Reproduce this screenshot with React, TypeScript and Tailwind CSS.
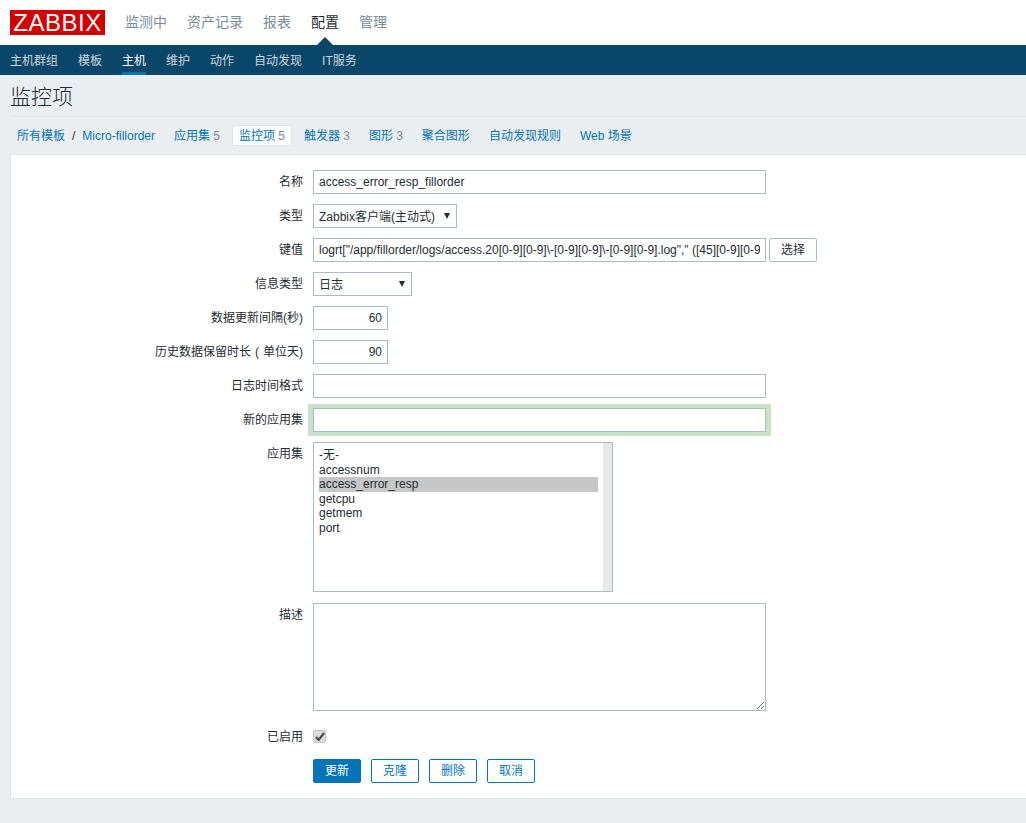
const font = { fontFamily: '"Liberation Sans", "Noto Sans CJK SC", sans-serif' }

const topMenu = ['监测中', '资产记录', '报表', '配置', '管理']
const subMenu = ['主机群组', '模板', '主机', '维护', '动作', '自动发现', 'IT服务']
const tabs = [
  { name: '应用集', count: 5 },
  { name: '监控项', count: 5, active: true },
  { name: '触发器', count: 3 },
  { name: '图形', count: 3 },
  { name: '聚合图形' },
  { name: '自动发现规则' },
  { name: 'Web 场景' },
]
const apps = ['-无-', 'accessnum', 'access_error_resp', 'getcpu', 'getmem', 'port']

const inputClass = 'h-6 border border-[#acbbc2] bg-white px-[5px] text-xs text-[#1f2c33] outline-none'
const keyValue =
  'logrt["/app/fillorder/logs/access.20[0-9][0-9]\\-[0-9][0-9]\\-[0-9][0-9].log"," ([45][0-9][0-9]) ",,,skip]'

function Row({ label, children }: { label: React.ReactNode; children: React.ReactNode }) {
  return (
    <div className="flex items-start">
      <label className="w-[292px] shrink-0 pt-[5px] text-right text-xs leading-[14px] text-[#1f2c33]">{label}</label>
      <div className="ml-[10px] flex min-w-0 gap-[3px]">{children}</div>
    </div>
  )
}

function Select({ value, width }: { value: string; width: string }) {
  return (
    <div className={`relative ${width}`}>
      <select
        defaultValue={value}
        className="block h-6 w-full appearance-none rounded-none border border-[#acbbc2] bg-white pt-[2px] pl-[5px] text-xs text-[#1f2c33] outline-none"
      >
        <option>{value}</option>
      </select>
      <svg className="absolute top-[9px] right-[7px]" width="6" height="6" viewBox="0 0 6 6">
        <path d="M0 0h6L3 6z" fill="#1f2c33" />
      </svg>
    </div>
  )
}

function App() {
  return (
    <div className="min-h-screen overflow-hidden bg-[#ebeef0]" style={font}>
      {/* top menu */}
      <div className="flex h-[45px] items-center bg-white pl-[10px]">
        <div className="flex h-[25px] w-[95px] items-center justify-center bg-[#d40000] text-[24px] leading-none tracking-[0.5px] text-white">
          ZABBIX
        </div>
        <div className="mb-px ml-5 flex gap-5 text-sm leading-5">
          {topMenu.map((item) => (
            <div key={item} className={`relative ${item === '配置' ? 'text-[#1f2c33]' : 'text-[#768d99]'}`}>
              {item}
              {item === '配置' && (
                <div className="absolute top-[25px] left-[6px] h-0 w-0 border-x-[8px] border-b-[8px] border-x-transparent border-b-[#0a466a]" />
              )}
            </div>
          ))}
        </div>
      </div>

      <div className="flex h-[30px] gap-5 bg-[#0a466a] pl-[10px] text-xs">
        {subMenu.map((item) => (
          <div
            key={item}
            className={`h-[30px] pt-[9px] leading-[14px] ${item === '主机' ? 'border-b-[3px] border-[#0275b8] text-white' : 'text-[#f2f2f2]/85'}`}
          >
            {item}
          </div>
        ))}
      </div>

      {/* title */}
      <div className="ml-[10px] flex h-[42px] items-center border-b border-[#dfe4e7] pt-[2px]">
        <h1 className="text-[21px] leading-none font-light text-[#1f2c33]">监控项</h1>
      </div>

      {/* breadcrumbs + tabs */}
      <div className="ml-[10px] flex h-[37px] items-center gap-[5px] text-xs">
        <div className="flex items-center px-[7px] text-[#0275b8]">
          <span>所有模板</span>
          <span className="mx-[7px] text-[#1f2c33]">/</span>
          <span>Micro-fillorder</span>
        </div>
        {tabs.map((tab) => (
          <div
            key={tab.name}
            className={`flex h-[21px] items-center border px-[6px] text-[#0275b8] ${tab.active ? 'border-[#dfe4e7] bg-white' : 'border-transparent'}`}
          >
            {tab.name}
            {tab.count && <span className="ml-[3.25px] text-[#768d99]">{tab.count}</span>}
          </div>
        ))}
      </div>

      {/* form */}
      <form className="mb-[25px] ml-[10px] flex flex-col gap-[10px] border border-r-0 border-[#dfe4e7] bg-white pt-[15px] pb-[15px]">
        <Row label="名称">
          <input className={`${inputClass} w-[453px]`} defaultValue="access_error_resp_fillorder" />
        </Row>
        <Row label="类型">
          <Select value="Zabbix客户端(主动式)" width="w-[144px]" />
        </Row>
        <Row label="键值">
          <input className={`${inputClass} w-[453px]`} defaultValue={keyValue} />
          <button type="button" className="h-6 w-12 rounded-[2px] border border-[#acbbc2] bg-white text-xs text-[#1f2c33]">
            选择
          </button>
        </Row>
        <Row label="信息类型">
          <Select value="日志" width="w-[99px]" />
        </Row>
        <Row label="数据更新间隔(秒)">
          <input className={`${inputClass} w-[75px] text-right`} defaultValue="60" />
        </Row>
        <Row
          label={
            <>
              历史数据保留时长<span className="px-1">(</span>单位天)
            </>
          }
        >
          <input className={`${inputClass} w-[75px] text-right`} defaultValue="90" />
        </Row>
        <Row label="日志时间格式">
          <input className={`${inputClass} w-[453px]`} />
        </Row>
        <Row label="新的应用集">
          <input className={`${inputClass} w-[453px] shadow-[0_0_0_4px_#c7e2c7,-1px_0_0_4px_#c7e2c7,1px_0_0_4px_#c7e2c7]`} />
        </Row>
        <Row label="应用集">
          <div className="flex h-[150px] w-[300px] border border-[#acbbc2] bg-white">
            <div className="flex-1 pt-[5px] pr-[5px] pl-[5px] text-xs leading-[14.6px] text-[#1f2c33]">
              {apps.map((app) => (
                <div key={app} className={app === 'access_error_resp' ? 'bg-[#c6c6c6]' : ''}>
                  {app}
                </div>
              ))}
            </div>
            <div className="w-[9px] bg-[#e8e8e8]" />
          </div>
        </Row>
        <div className="mt-px">
          <Row label="描述">
            <textarea className="block h-[108px] w-[453px] border border-[#acbbc2] bg-white text-xs outline-none" />
          </Row>
        </div>
        {/* checkbox row sits on the box's centre line */}
        <div className="mt-[8px] flex h-[15px] items-center">
          <label className="w-[292px] shrink-0 text-right text-xs leading-[14px] text-[#1f2c33]">已启用</label>
          <div className="ml-[10px] flex h-[13px] w-[13px] items-center justify-center rounded-[2px] border border-[#c4c4c4] bg-[#dcdcdc]">
            <svg width="10" height="9" viewBox="0 0 10 9">
              <path d="M1 5l2.6 3L9 1" fill="none" stroke="#4a4a4a" strokeWidth="2.2" />
            </svg>
          </div>
        </div>
        <div className="mt-[5px] flex gap-[10px] pl-[302px] text-xs">
          <button type="button" className="h-6 w-12 rounded-[2px] border border-[#0275b8] bg-[#0275b8] text-white">
            更新
          </button>
          {['克隆', '删除', '取消'].map((label) => (
            <button key={label} type="button" className="h-6 w-12 rounded-[2px] border border-[#0275b8] bg-white text-[#0275b8]">
              {label}
            </button>
          ))}
        </div>
      </form>
    </div>
  )
}

export default App
